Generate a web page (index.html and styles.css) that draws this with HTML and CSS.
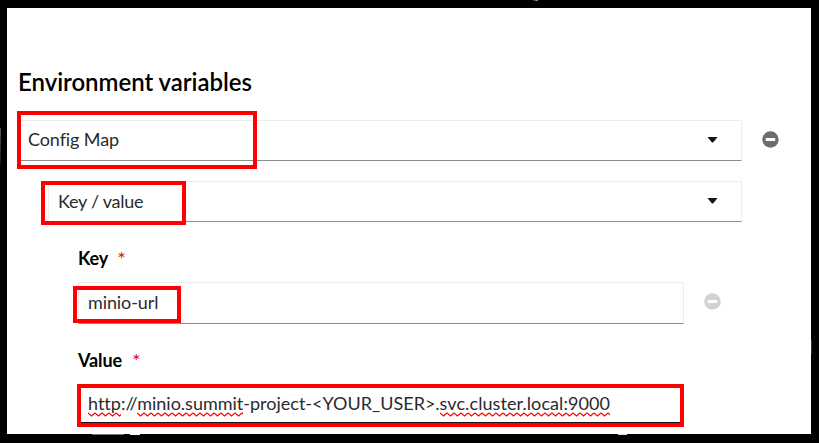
FILE: index.html
```html
<!DOCTYPE html>
<html lang="en">
<head>
<meta charset="utf-8">
<title>Environment variables</title>
<link rel="stylesheet" href="styles.css">
</head>
<body>
<main class="panel">
  <h1 class="title">Environment variables</h1>
  <div class="row row-source">
    <div class="field select"><span class="t-config">Config Map</span><i class="caret"></i><b class="mark mark-source"></b></div>
    <button class="remove" aria-label="Remove"><svg viewBox="0 0 18 18"><circle cx="9" cy="9" r="8.7"/><rect x="4" y="7.4" width="10" height="3.2" rx=".5"/></svg></button>
  </div>
  <div class="row row-type">
    <div class="field select"><span class="t-type">Key / value</span><i class="caret"></i><b class="mark mark-type"></b></div>
  </div>
  <div class="label label-key"><span class="t-key">Key</span><span class="req">*</span></div>
  <div class="row row-key">
    <div class="field"><span class="t-minio">minio-url</span><b class="mark mark-key"></b></div>
    <button class="remove disabled" aria-label="Remove" disabled><svg viewBox="0 0 18 18"><circle cx="9" cy="9" r="8.7"/><rect x="4" y="7.4" width="10" height="3.2" rx=".5"/></svg></button>
  </div>
  <div class="label label-value"><span class="t-value">Value</span><span class="req">*</span></div>
  <div class="row row-value">
    <div class="field active"><span class="t-url"><span class="spell">http</span>://<span class="spell">minio.summit</span>-project-&lt;YOUR_USER&gt;.<span class="spell host">svc.cluster.local:9000</span></span><b class="mark mark-value"></b></div>
  </div>
</main>
<i class="speck speck-left"></i>
<i class="speck speck-top"></i>
<i class="speck speck-right"></i>
<i class="speck speck-bottom-a"></i>
<i class="speck speck-bottom-b"></i>
<i class="speck speck-bottom-c"></i>
</body>
</html>
```
FILE: styles.css
```css
* { box-sizing: border-box; }
body { position: relative; margin: 0; height: 443px; padding: 8px 8px 9px 7px; background: #000; overflow: hidden; font-family: Lato, sans-serif; font-variant-ligatures: none; color: #2b2b2b; }
.panel { height: 426px; background: #fff; padding: 58px 0 0 11px; }
.title { margin: 0; height: 54px; line-height: 32px; font-size: 24px; letter-spacing: -.04px; font-weight: 600; color: #000; }
.row { display: flex; align-items: center; }
.row-source { height: 41px; }
.row-type { height: 41px; margin: 20px 0 0 30px; }
.row-key { height: 42px; margin-left: 60px; }
.row-value { height: 39px; margin-left: 60px; }
.field { position: relative; display: flex; align-items: center; justify-content: space-between; width: 724px; height: 100%; border: 1px solid #ededed; border-bottom-color: #8a8d90; padding: 0 23px 2px 9px; font-size: 18px; white-space: pre; }
.row-type .field { width: 694px; }
.row-key .field, .row-value .field { width: 606px; }
.row-value .field { border-bottom-color: #151515; padding-bottom: 2px; }
.t-config { letter-spacing: -.1px; padding-bottom: 1px; }
.t-type { letter-spacing: -.25px; }
.t-minio { letter-spacing: -.1px; }
.t-url { letter-spacing: 0; }
.host { letter-spacing: .08px; }
.caret { width: 11px; height: 6px; background: #151515; clip-path: polygon(0 0, 100% 0, 55% 100%, 45% 100%); }
.remove { margin: 0 0 2px 20px; padding: 0; border: 0; background: none; width: 17px; height: 17px; color: #6a6e73; }
.remove svg { display: block; width: 17px; height: 17px; fill: currentColor; }
.remove rect { fill: #fff; }
.disabled { color: #d2d2d2; margin-bottom: 3px; }
.label { display: flex; margin-left: 60px; font-size: 18px; line-height: 24px; font-weight: 700; color: #000; letter-spacing: -.1px; }
.label-key { height: 36px; margin-top: 24px; }
.label-value { height: 36px; margin-top: 24px; }
.req { margin-left: 9px; color: #c9190b; font-weight: 400; font-size: 20px; }
.label-value .req { margin-left: 10px; }
.mark { position: absolute; border: 4px solid #f00; }
.mark-source { left: -2px; top: -10px; width: 240px; height: 58px; }
.mark-type { left: -8px; top: -1px; width: 145px; height: 44px; }
.mark-key { left: -6px; top: 3px; width: 108px; height: 37px; }
.mark-value { left: -2px; top: -1px; width: 607px; height: 43px; }
.spell { position: relative; }
.spell::after { content: ""; position: absolute; left: 0; right: 0; bottom: -3px; height: 5px; background: url("data:image/svg+xml,%3Csvg xmlns='http://www.w3.org/2000/svg' width='7' height='5'%3E%3Cpath d='M-1 0L0 1L3.5 4L7 1L8 0' fill='none' stroke='red' stroke-width='1.2'/%3E%3C/svg%3E") repeat-x; }
.speck { position: absolute; background: #555; }
.speck-left { left: 0; top: 128px; width: 1px; height: 38px; background: linear-gradient(#555, #111); }
.speck-top { left: 533px; top: 0; width: 5px; height: 1px; background: linear-gradient(90deg, #222, #aaa); }
.speck-right { left: 811px; top: 340px; width: 1px; height: 14px; background: #333; }
.speck-bottom-a { left: 92px; top: 434px; width: 32px; height: 1px; background: #777; }
.speck-bottom-b { left: 130px; top: 434px; width: 10px; height: 1px; background: #fff; }
.speck-bottom-c { left: 618px; top: 434px; width: 9px; height: 1px; background: #ddd; }
```
